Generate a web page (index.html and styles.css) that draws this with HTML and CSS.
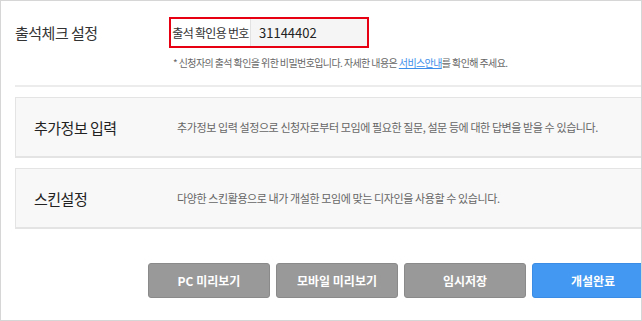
FILE: index.html
```html
<!DOCTYPE HTML>
<html>
  <head>
    <meta http-equiv="Content-Type" content="text/html; charset=utf-8" />
    <link rel="stylesheet" href="styles.css">
  </head>
  <body>
    <div class="frame">
      <div class="check">
        <h2 class="check-title">출석체크 설정</h2>
        <div class="check-body">
          <div class="code-box">
            <span class="code-label">출석 확인용 번호</span>
            <span class="code-value">31144402</span>
          </div>
          <p class="hint">* 신청자의 출석 확인을 위한 비밀번호입니다. 자세한 내용은 <a href="#">서비스안내</a>를 확인해 주세요.</p>
        </div>
      </div>
      <div class="rule"></div>
      <div class="option">
        <h3 class="option-title">추가정보 입력</h3>
        <p class="option-desc">추가정보 입력 설정으로 신청자로부터 모임에 필요한 질문, 설문 등에 대한 답변을 받을 수 있습니다.</p>
      </div>
      <div class="option">
        <h3 class="option-title">스킨설정</h3>
        <p class="option-desc">다양한 스킨활용으로 내가 개설한 모임에 맞는 디자인을 사용할 수 있습니다.</p>
      </div>
      <div class="actions">
        <button class="btn">PC 미리보기</button>
        <button class="btn">모바일 미리보기</button>
        <button class="btn">임시저장</button>
        <button class="btn btn-blue">개설완료</button>
      </div>
    </div>
  </body>
</html>
```

FILE: styles.css
```css
body         { margin: 0; background: white; font-family: "Noto Sans CJK KR", "Noto Sans", sans-serif; color: #333; }
.frame       { width: 640px; height: 319px; border: 1px solid #d6d6d6; overflow: hidden; }

.check       { display: flex; padding: 16px 0 0 14px; height: 68px; }
.check-title { width: 154px; margin: 5px 0 0; font-size: 15px; font-weight: normal; letter-spacing: -0.5px; }
.code-box    { display: flex; width: 196px; height: 27px; border: 2px solid #e60012; }
.code-label  { width: 79px; line-height: 27px; text-align: center; font-size: 12px; letter-spacing: -0.7px; color: #333; background: white; border-right: 1px solid #e2e2e2; }
.code-value  { flex: 1; padding-left: 8px; line-height: 27px; font-size: 13px; color: #222; background: #f5f5f5; }
.hint        { margin: 7px 0 0 4px; font-size: 10px; letter-spacing: -0.6px; color: #666; }
.hint a      { color: #3b8eea; }

.rule        { margin-left: 14px; height: 2px; background: #ececec; }

.option      { display: flex; align-items: center; margin: 10px -2px 0 14px; height: 58px; background: #f8f8f8; border: 1px solid #e4e4e4; border-bottom-width: 2px; }
.option-title{ width: 143px; margin: 0 0 0 18px; font-size: 15px; font-weight: normal; letter-spacing: -0.5px; color: #222; }
.option-desc { margin: 0; font-size: 11px; letter-spacing: -0.4px; color: #666; }

.actions     { display: flex; gap: 6px; margin: 34px 0 0 147px; }
.btn         { flex: none; width: 122px; height: 35px; border: 1px solid #8a8a8a; border-radius: 3px; background: #999; color: white; font-family: inherit; font-size: 12px; font-weight: bold; }
.btn-blue    { background: #4399f1; border-color: #3a8ce4; }
```
